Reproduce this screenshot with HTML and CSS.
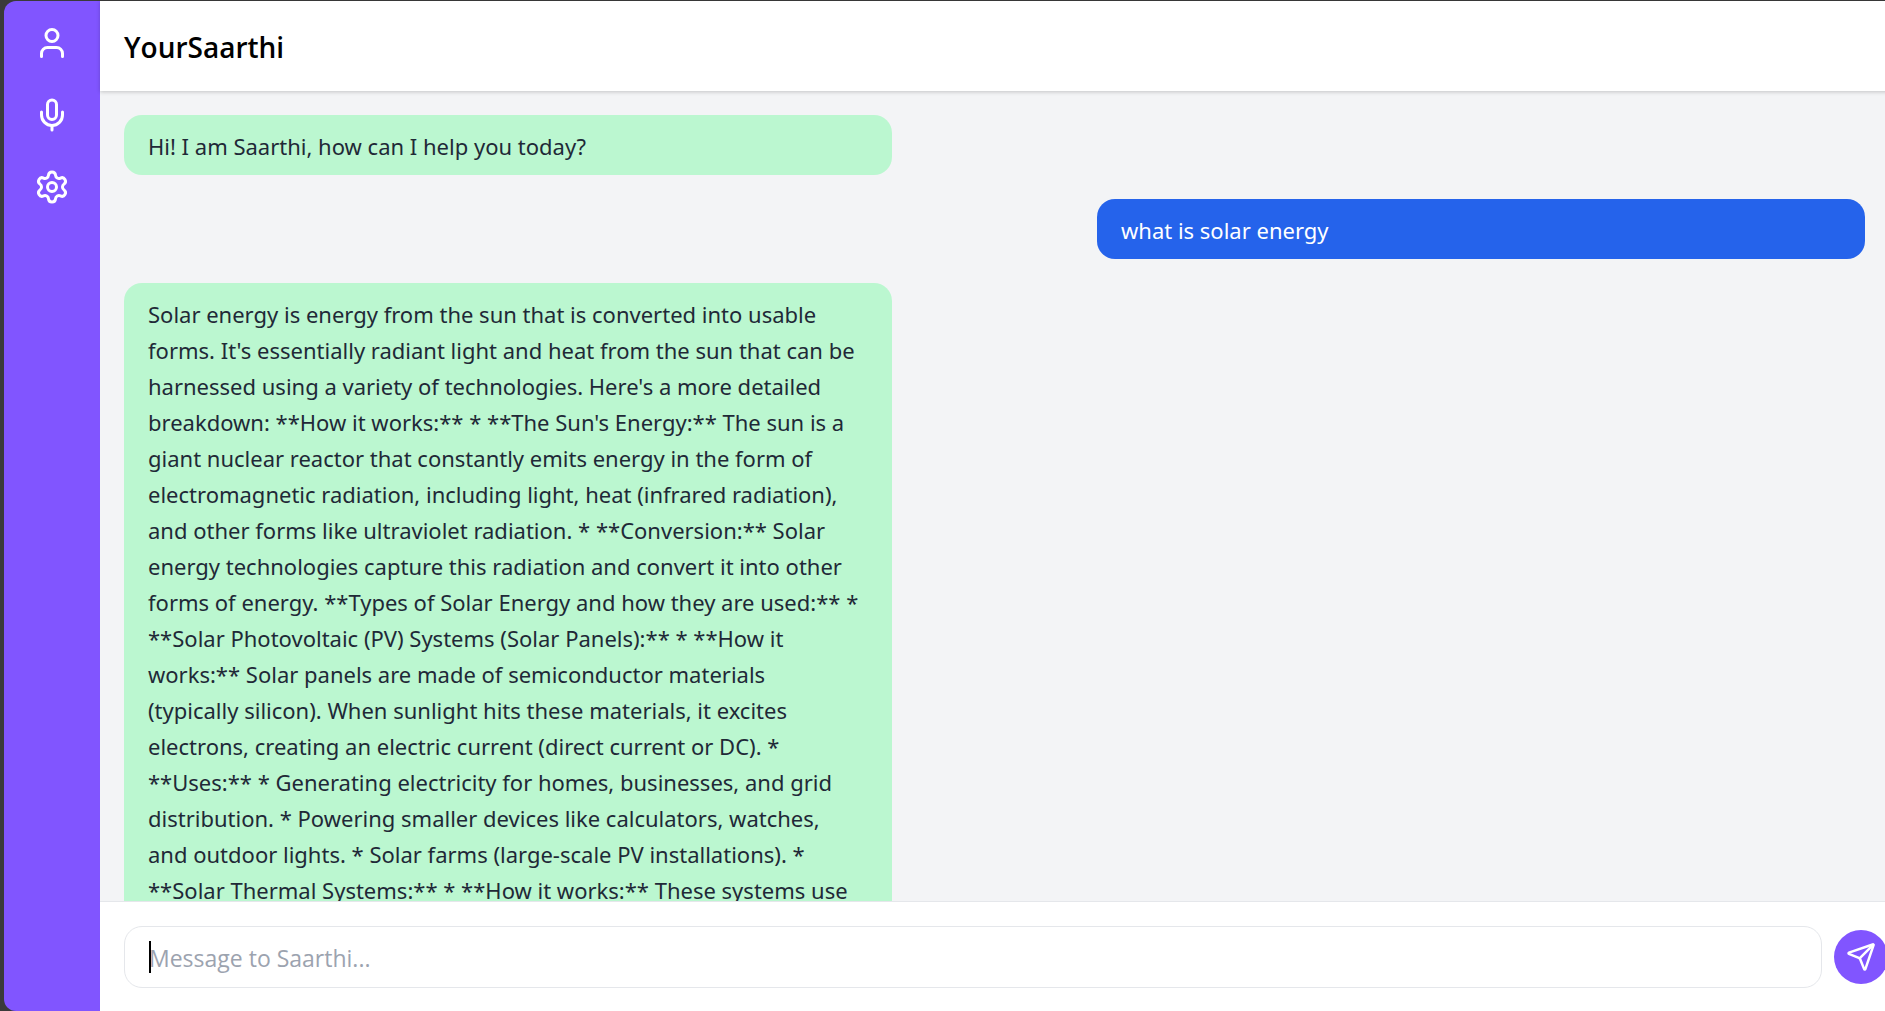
FILE: index.html
```html
<!DOCTYPE html>
<html lang="en">
<head>
<meta charset="utf-8">
<meta name="viewport" content="width=device-width, initial-scale=1">
<title>YourSaarthi</title>
<link rel="stylesheet" href="styles.css">
</head>
<body>
<div class="app">
  <nav class="sidebar" aria-label="Main">
    <button class="nav-button" type="button" aria-label="Profile">
      <svg class="icon" viewBox="0 0 24 24"><path d="M19 21v-2a4 4 0 0 0-4-4H9a4 4 0 0 0-4 4v2"/><circle cx="12" cy="7" r="4"/></svg>
    </button>
    <button class="nav-button" type="button" aria-label="Voice">
      <svg class="icon" viewBox="0 0 24 24"><path d="M12 2a3 3 0 0 0-3 3v7a3 3 0 0 0 6 0V5a3 3 0 0 0-3-3Z"/><path d="M19 10v2a7 7 0 0 1-14 0v-2"/><path d="M12 19v3"/></svg>
    </button>
    <button class="nav-button" type="button" aria-label="Settings">
      <svg class="icon" viewBox="0 0 24 24"><path d="M9.671 4.136a2.34 2.34 0 0 1 4.659 0 2.34 2.34 0 0 0 3.319 1.915 2.34 2.34 0 0 1 2.33 4.033 2.34 2.34 0 0 0 0 3.831 2.34 2.34 0 0 1-2.33 4.033 2.34 2.34 0 0 0-3.319 1.915 2.34 2.34 0 0 1-4.659 0 2.34 2.34 0 0 0-3.32-1.915 2.34 2.34 0 0 1-2.33-4.033 2.34 2.34 0 0 0 0-3.831A2.34 2.34 0 0 1 6.35 6.051a2.34 2.34 0 0 0 3.319-1.915"/><circle cx="12" cy="12" r="3"/></svg>
    </button>
  </nav>
  <div class="chat">
    <header class="header"><h1 class="title">YourSaarthi</h1></header>
    <main class="messages">
      <p class="message message-bot">Hi! I am Saarthi, how can I help you today?</p>
      <p class="message message-user">what is solar energy</p>
      <p class="message message-bot">Solar energy is energy from the sun that is converted into usable
forms. It's essentially radiant light and heat from the sun that can be
harnessed using a variety of technologies. Here's a more detailed
breakdown: **How it works:** * **The Sun's Energy:** The sun is a
giant nuclear reactor that constantly emits energy in the form of
electromagnetic radiation, including light, heat (infrared radiation),
and other forms like ultraviolet radiation. * **Conversion:** Solar
energy technologies capture this radiation and convert it into other
forms of energy. **Types of Solar Energy and how they are used:** *
**Solar Photovoltaic (PV) Systems (Solar Panels):** * **How it
works:** Solar panels are made of semiconductor materials
(typically silicon). When sunlight hits these materials, it excites
electrons, creating an electric current (direct current or DC). *
**Uses:** * Generating electricity for homes, businesses, and grid
distribution. * Powering smaller devices like calculators, watches,
and outdoor lights. * Solar farms (large-scale PV installations). *
**Solar Thermal Systems:** * **How it works:** These systems use</p>
    </main>
    <form class="composer">
      <div class="field">
        <input class="input" type="text" aria-label="Message" placeholder="Message to Saarthi...">
        <span class="caret"></span>
      </div>
      <button class="send" type="button" aria-label="Send">
        <svg class="icon icon-send" viewBox="0 0 24 24"><path d="M14.536 21.686a.5.5 0 0 0 .937-.024l6.5-19a.496.496 0 0 0-.635-.635l-19 6.5a.5.5 0 0 0-.024.937l7.93 3.18a2 2 0 0 1 1.112 1.11z"/><path d="m21.854 2.147-10.94 10.939"/></svg>
      </button>
    </form>
  </div>
</div>
</body>
</html>
```
FILE: styles.css
```css
* {
  box-sizing: border-box;
}

body {
  margin: 0;
  overflow: hidden;
  background: #3a3a3a;
  font-family: "Open Sans", "Noto Sans", sans-serif;
  font-size: 23px;
  line-height: 36px;
  color: #1f2937;
}

.app {
  display: flex;
  width: 100vw;
  height: calc(100vh - 1px);
  margin: 1px 0 0 4px;
}

.sidebar {
  display: flex;
  flex: none;
  flex-direction: column;
  align-items: center;
  gap: 36px;
  width: 96px;
  padding-top: 24px;
  border-radius: 12px 0 0 12px;
  background: #8155ff;
}

.nav-button,
.send {
  display: flex;
  align-items: center;
  justify-content: center;
  padding: 0;
  border: 0;
  background: none;
  color: #fff;
}

.icon {
  width: 36px;
  height: 36px;
  fill: none;
  stroke: currentColor;
  stroke-width: 2;
  stroke-linecap: round;
  stroke-linejoin: round;
}

.icon-send {
  width: 30px;
  height: 30px;
}

.chat {
  display: flex;
  flex: 1;
  flex-direction: column;
  min-width: 0;
  background: #f3f4f6;
}

.header {
  z-index: 1;
  flex: none;
  padding: 25px 24px 23px;
  background: #fff;
  box-shadow: 0 1px 4px rgba(0, 0, 0, 0.2);
}

.title {
  margin: 0;
  font-size: 28px;
  font-weight: 600;
  line-height: 42px;
  color: #000;
}

.messages {
  display: flex;
  flex: 1;
  flex-direction: column;
  gap: 24px;
  min-height: 0;
  padding: 24px;
  overflow: hidden;
  font-family: "Noto Sans", "Open Sans", sans-serif;
  font-size: 22px;
}

.message {
  flex: none;
  width: 100%;
  max-width: 768px;
  margin: 0;
  padding: 13px 24px 11px;
  border-radius: 18px;
  white-space: pre-line;
}

.message-bot {
  background: #bbf7d0;
}

.message-user {
  align-self: flex-end;
  background: #2563eb;
  color: #fff;
}

.composer {
  display: flex;
  flex: none;
  align-items: center;
  gap: 12px;
  padding: 24px 1px 23px 24px;
  border-top: 1px solid #e5e7eb;
  background: #fff;
}

.field {
  position: relative;
  flex: 1;
}

.input {
  display: block;
  width: 100%;
  height: 62px;
  padding: 2px 24px 0;
  border: 1px solid #e5e7eb;
  border-radius: 18px;
  outline: 0;
  background: #fff;
  font: inherit;
  color: inherit;
}

.input::placeholder {
  color: #9ca3af;
  opacity: 1;
}

.caret {
  position: absolute;
  top: 15px;
  left: 25px;
  width: 2px;
  height: 32px;
  background: #000;
}

.send {
  flex: none;
  width: 54px;
  height: 54px;
  border-radius: 50%;
  background: #8155ff;
}
```
